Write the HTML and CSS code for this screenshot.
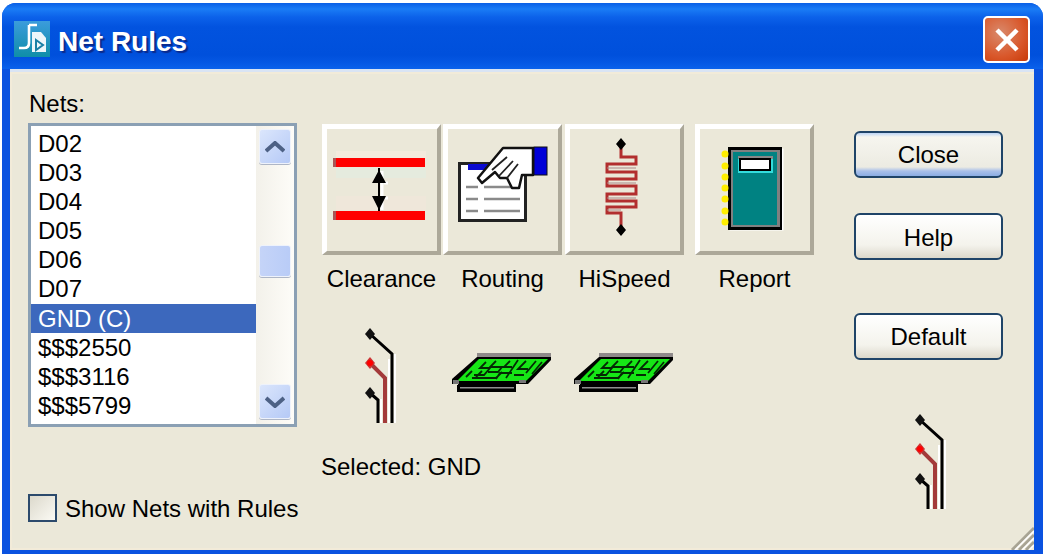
FILE: index.html
```html
<!DOCTYPE html>
<html lang="en">
<head>
<meta charset="utf-8">
<title>Net Rules</title>
<link rel="stylesheet" href="styles.css">
</head>
<body>
<svg class="defs" aria-hidden="true">
  <symbol id="net" viewBox="0 0 33 100">
    <g fill="none" stroke-width="3">
      <path d="M30 28V97M24 33V97M16 73V97" stroke="#fff" stroke-width="2"/>
      <path d="M5 8L27 28V97" stroke="#000"/>
      <path d="M5 37L20 52V97" stroke="#a33a3a" stroke-width="4"/>
      <path d="M5 67L13 74V97" stroke="#000"/>
    </g>
    <path d="M5 2L10 8L5 14L0 8Z" fill="#111"/>
    <path d="M5 31L10 37L5 43L0 37Z" fill="#c33"/>
    <circle cx="5" cy="37" r="3" fill="#f00"/>
    <path d="M5 61L10 67L5 73L0 67Z" fill="#111"/>
  </symbol>
  <symbol id="board" viewBox="0 0 100 40">
    <rect x="25" y="0" width="74" height="4" fill="#8f8a8a"/>
    <path d="M25 4H99V7L76 31H64V34H6V31H0V26Z" fill="#000"/>
    <path d="M27 6H96L74 28H5Z" fill="#16e616"/>
    <g fill="none" stroke="#042a04" stroke-width="1.8">
      <path d="M34 9L28 15H38L32 22H22M44 8L38 14H50L46 19H36M58 8L52 14H60M66 7L54 25M74 8L66 16H76M84 8L74 20M90 9L80 21M20 25H44L50 19M30 18L24 24M60 20H48L44 26M72 22H62M14 24L20 18"/>
    </g>
    <rect x="5" y="32" width="59" height="7" fill="#000"/>
    <rect x="8" y="34" width="54" height="1.5" fill="#8f8f8f"/>
    <rect x="1" y="27" width="6" height="4" fill="#777"/>
    <rect x="67" y="27" width="7" height="3" fill="#777"/>
  </symbol>
</svg>
<div class="window">
  <header class="titlebar">
    <svg class="app-icon" viewBox="0 0 36 36">
      <defs>
        <linearGradient id="appbg" x1="0" y1="0" x2="0" y2="1">
          <stop offset="0" stop-color="#3b9cdc"/>
          <stop offset="1" stop-color="#0f8ea8"/>
        </linearGradient>
      </defs>
      <rect width="36" height="36" fill="url(#appbg)"/>
      <path d="M15 4H23M15 4V22Q15 27 10 27H5" fill="none" stroke="#fff" stroke-width="2.6"/>
      <path d="M18 11H27L32 17V31H18Z" fill="#eef6fa"/>
      <path d="M22 19L29 24L22 29Z" fill="none" stroke="#1a7fa5" stroke-width="2"/>
    </svg>
    <h1 class="title">Net Rules</h1>
    <button class="close-x" type="button" aria-label="Close">
      <svg class="close-glyph" viewBox="0 0 26 26"><path d="M3 3L23 23M23 3L3 23" stroke="#fff" stroke-width="4.5" fill="none"/></svg>
    </button>
  </header>
  <main class="client">
    <section class="nets-col">
      <div class="nets-label">Nets:</div>
      <div class="listbox">
        <ul class="rows">
          <li>D02</li><li>D03</li><li>D04</li><li>D05</li><li>D06</li><li>D07</li>
          <li class="sel">GND (C)</li><li>$$$2550</li><li>$$$3116</li><li>$$$5799</li>
        </ul>
        <div class="scrollbar">
          <div class="sb-btn"><svg class="sb-arrow" viewBox="0 0 20 12"><path d="M1 10L10 2L19 10" fill="none" stroke="#4d6185" stroke-width="4"/></svg></div>
          <div class="sb-thumb"></div>
          <div class="sb-btn sb-down"><svg class="sb-arrow" viewBox="0 0 20 12"><path d="M1 2L10 10L19 2" fill="none" stroke="#4d6185" stroke-width="4"/></svg></div>
        </div>
      </div>
      <label class="check"><span class="check-box"></span><span class="check-text">Show Nets with Rules</span></label>
    </section>

    <section class="tools-col">
      <div class="tools">
        <div class="tool">
          <div class="tool-btn">
            <svg class="tool-icon" viewBox="0 0 119 131">
              <g opacity="0.45">
                <rect x="14" y="27" width="90" height="7" fill="#fdeee2"/>
                <rect x="14" y="44" width="90" height="10" fill="#dff0e6"/>
                <rect x="14" y="72" width="90" height="14" fill="#f6e7dc"/>
              </g>
              <path d="M60 47V86M62 59H66M62 74H66" stroke="#fff" stroke-width="3" fill="none"/>
              <rect x="11" y="34" width="92" height="9" fill="#f00"/>
              <rect x="11" y="34" width="3" height="9" fill="#a55"/>
              <rect x="11" y="87" width="92" height="9" fill="#f00"/>
              <rect x="11" y="87" width="3" height="9" fill="#a55"/>
              <path d="M57 44V87" stroke="#000" stroke-width="2"/>
              <path d="M57 46L64 59H50Z M57 86L64 72H50Z" fill="#000"/>
            </svg>
          </div>
          <span class="tool-label">Clearance</span>
        </div>
        <div class="tool">
          <div class="tool-btn">
            <svg class="tool-icon" viewBox="0 0 119 131">
              <rect x="16.500" y="39.500" width="66" height="57" fill="#fff" stroke="#222" stroke-width="3"/>
              <rect x="25" y="40" width="22" height="6" fill="#0a0ad0"/>
              <path d="M23 63H35M41 63H77M23 75H35M41 75H77M23 87H35M41 87H77" stroke="#8a8a8a" stroke-width="2.500"/>
              <path d="M35 54L60 24H90V51H79L76 64H69L64 54H57L52 48L39 59Z" fill="#fff" stroke="#111" stroke-width="2.500" stroke-linejoin="round"/>
              <path d="M49 46L64 33M56 52L70 37M64 54L75 40" stroke="#222" stroke-width="1.800"/>
              <rect x="91" y="23" width="13" height="28" fill="#0000d8" stroke="#111" stroke-width="1"/>
            </svg>
          </div>
          <span class="tool-label">Routing</span>
        </div>
        <div class="tool tool-hispeed">
          <div class="tool-btn">
            <svg class="tool-icon" viewBox="0 0 119 131">
              <path d="M56 20V33H71V40H42V48H71V55H42V62H71V70H42V77H71V83H42V89H56V106" fill="none" stroke="#b22e2e" stroke-width="3"/>
              <path d="M42 44H71M42 59H71M42 74H71M42 86H56" stroke="#a88" stroke-width="1"/>
              <path d="M56 14L61 20L56 26L51 20Z M56 100L61 106L56 112L51 106Z" fill="#000"/>
            </svg>
          </div>
          <span class="tool-label">HiSpeed</span>
        </div>
        <div class="tool tool-report">
          <div class="tool-btn">
            <svg class="tool-icon" viewBox="0 0 119 131">
              <rect x="34.500" y="24.500" width="54" height="82" fill="#fff"/>
              <rect x="33" y="23" width="54" height="83" fill="#000"/>
              <rect x="36" y="26" width="49" height="77" fill="#808080"/>
              <rect x="38" y="28" width="44" height="73" fill="#008282"/>
              <rect x="43" y="32" width="35" height="17" fill="#33dddd"/>
              <rect x="43" y="32" width="35" height="3" fill="#888"/>
              <rect x="44" y="34" width="32" height="13" fill="#000"/>
              <rect x="46" y="36" width="28" height="9" fill="#fff"/>
              <g fill="#ffee00">
                <circle cx="30" cy="30" r="3.500"/><circle cx="30" cy="42" r="3.500"/>
                <circle cx="30" cy="53" r="3.500"/><circle cx="30" cy="64" r="3.500"/>
                <circle cx="30" cy="75" r="3.500"/><circle cx="30" cy="87" r="3.500"/>
                <circle cx="30" cy="98" r="3.500"/>
              </g>
            </svg>
          </div>
          <span class="tool-label">Report</span>
        </div>
      </div>
      <div class="status-icons">
        <div class="status-cell"><svg class="net-icon"><use href="#net"/></svg></div>
        <div class="status-cell"><svg class="board-icon"><use href="#board"/></svg></div>
        <div class="status-cell"><svg class="board-icon"><use href="#board"/></svg></div>
      </div>
      <div class="selected">Selected: GND</div>
    </section>

    <section class="actions-col">
      <button class="action action-default" type="button">Close</button>
      <button class="action action-help" type="button">Help</button>
      <button class="action action-reset" type="button">Default</button>
      <svg class="net-icon net-corner"><use href="#net"/></svg>
    </section>

    <svg class="grip" viewBox="0 0 24 24">
      <path d="M24 2L2 24M24 9L9 24M24 16L16 24" stroke="#a8a494" stroke-width="3" fill="none"/>
      <path d="M24 5L5 24M24 12L12 24M24 19L19 24" stroke="#fff" stroke-width="1.500" fill="none"/>
    </svg>
  </main>
</div>
</body>
</html>
```
FILE: styles.css
```css
* { box-sizing: border-box; }
html, body { height: 100%; }
body {
  margin: 0;
  padding: 3px 1px 1px 2px;
  background: #fff;
  font-family: "Liberation Sans", Arial, sans-serif;
  font-size: 24px;
  color: #000;
  overflow: hidden;
}
.defs { width: 0; height: 0; position: absolute; }

.window {
  height: 551px;
  display: flex;
  flex-direction: column;
  border-radius: 14px 14px 0 0;
  background: #0a52e0;
  padding: 0 9px 4px 8px;
  overflow: hidden;
}

.titlebar {
  flex: none;
  height: 66px;
  margin: 0 -9px 0 -8px;
  padding: 18px 13px 0 12px;
  display: flex;
  align-items: flex-start;
  background: linear-gradient(#0a5fe6 0, #1a7cf6 6px, #0c62ea 14px, #0253df 24px, #0050dc 52px, #0558e4 60px, #0a62ec 66px);
}
.app-icon { width: 36px; height: 36px; flex: none; }
.title {
  margin: 3px 0 0 8px;
  font-size: 28px;
  line-height: 36px;
  font-weight: 700;
  color: #fff;
  text-shadow: 2px 2px 1px #0a2a8c;
}
.close-x {
  margin: -5px 0 0 auto;
  width: 47px;
  height: 47px;
  padding: 0;
  border: 2px solid #fff;
  border-radius: 5px;
  background: radial-gradient(circle at 35% 35%, #d98a6c, #d9572a 60%, #c83a08);
  display: flex;
  align-items: center;
  justify-content: center;
}
.close-glyph { width: 26px; height: 26px; }

.client {
  position: relative;
  flex: 1;
  display: flex;
  padding: 21px 0 27px 18px;
  background: #ebe8d9;
  border-top: 3px solid #d9e4f4;
  box-shadow: inset 0 2px 0 #f2ebd9, inset 2px 0 0 #f2ebd9, inset 0 -2px 0 #f2ebd9;
}

.nets-col {
  flex: none;
  width: 270px;
  display: flex;
  flex-direction: column;
  align-items: flex-start;
}
.nets-label { line-height: 24px; margin: -1px 0 7px 1px; }
.listbox {
  width: 269px;
  height: 304px;
  display: flex;
  background: #fff;
  border: 3px solid #8ba0b4;
}
.rows {
  flex: 1;
  margin: 0;
  padding: 2.5px 0 0;
  list-style: none;
  overflow: hidden;
}
.rows li {
  height: 29.2px;
  line-height: 29.2px;
  padding-left: 7px;
  white-space: nowrap;
}
.rows .sel { background: #3c68bd; color: #fff; }
.scrollbar {
  flex: none;
  width: 38px;
  display: flex;
  flex-direction: column;
  padding: 3px 3px 5px 3px;
  background: linear-gradient(90deg, #f3f1ea, #fdfcf8);
}
.sb-btn, .sb-thumb {
  flex: none;
  width: 32px;
  border: 1px solid #eef2fb;
  border-radius: 3px;
  background: linear-gradient(135deg, #dbe6fc, #b5c9f6);
  box-shadow: 0 1px 0 #aeb6c6;
}
.sb-btn {
  height: 35px;
  display: flex;
  align-items: center;
  justify-content: center;
}
.sb-arrow { width: 20px; height: 12px; }
.sb-thumb { height: 32px; margin-top: 81px; background: linear-gradient(90deg, #c5d4f8, #b9ccf7); }
.sb-down { margin-top: auto; }

.check {
  margin-top: auto;
  display: flex;
  align-items: center;
  gap: 8px;
  white-space: nowrap;
}
.check-text { padding-top: 3px; }
.check-box {
  flex: none;
  width: 29px;
  height: 28px;
  border: 2px solid #2c4a6c;
  background: linear-gradient(135deg, #dcd9cc, #fbfaf4);
}

.tools-col {
  flex: none;
  width: 492px;
  margin-left: 24px;
  padding-top: 31px;
  display: flex;
  flex-direction: column;
}
.tools { display: flex; gap: 2px; }
.tool { flex: none; width: 119px; display: flex; flex-direction: column; align-items: center; }
.tool-hispeed { margin-left: 1px; }
.tool-report { margin-left: 9px; }
.tool-btn {
  width: 119px;
  height: 131px;
  background: #ebe8d9;
  border: solid;
  border-width: 5px 4px 4px 5px;
  border-color: #fff #aca899 #aca899 #fff;
  position: relative;
  overflow: hidden;
}
.tool-icon { position: absolute; left: -5px; top: -5px; width: 119px; height: 131px; }
.tool-label { margin-top: 10px; line-height: 28px; white-space: nowrap; }

.status-icons { display: flex; gap: 2px; margin-top: 33px; }
.status-cell {
  flex: none;
  width: 119px;
  height: 100px;
  display: flex;
  align-items: center;
  justify-content: center;
}
.status-cell:nth-child(3) { margin-left: 1px; }
.net-icon { width: 33px; height: 100px; }
.board-icon { width: 100px; height: 40px; margin-top: -6px; margin-left: -2px; }
.selected { margin: 27px 0 0 -1px; line-height: 28px; }

.actions-col {
  flex: none;
  width: 149px;
  margin-left: 40px;
  display: flex;
  flex-direction: column;
  padding-top: 38px;
}
.action {
  flex: none;
  width: 149px;
  height: 47px;
  padding: 0;
  font: inherit;
  color: #000;
  border: 2px solid #1f4468;
  border-radius: 6px;
  background: linear-gradient(#fff, #f4f3ec 70%, #dcd8cb);
}
.action-default {
  background: linear-gradient(#bcd4f6 0, #f6f5ef 4px, #ecebe2 34px, #a9c0ea 38px, #8badE4 100%);
}
.action-help { margin-top: 35px; padding-top: 2px; }
.action-reset { margin-top: 53px; }
.net-corner { margin: 52px 0 0 61px; flex: none; }

.grip {
  position: absolute;
  right: 0;
  bottom: 0;
  width: 24px;
  height: 24px;
}
```
